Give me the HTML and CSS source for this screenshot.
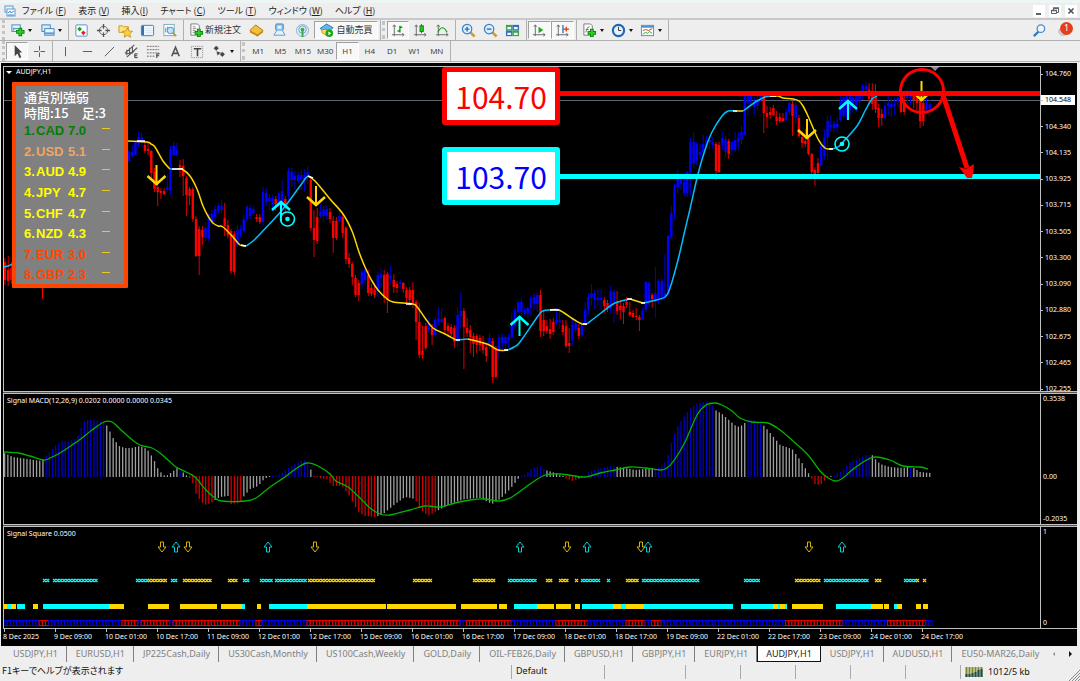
FILE: index.html
```html
<!DOCTYPE html>
<html lang="ja">
<head>
    <meta charset="UTF-8">
    <meta name="viewport" content="width=device-width, initial-scale=1.0">
    <title>AUDJPY,H1</title>
    <link rel="stylesheet" href="styles.css">
</head>
<body>
    <header class="menubar">
        <svg class="app-icon" viewBox="0 0 12 12"><rect x="1" y="1" width="8" height="6" fill="#e8f4fd" stroke="#5b9bd0"/><rect x="3" y="4" width="8" height="7" fill="#fff" stroke="#5b9bd0"/><path d="M4 8l2-2 1 2 3-2M4 10h6" fill="none" stroke="#4a8ac0"/></svg>
        <nav>
            <ul>
                <li><a href="#">ファイル (<u>F</u>)</a></li>
                <li><a href="#">表示 (<u>V</u>)</a></li>
                <li><a href="#">挿入(<u>I</u>)</a></li>
                <li><a href="#">チャート (<u>C</u>)</a></li>
                <li><a href="#">ツール (<u>T</u>)</a></li>
                <li><a href="#">ウィンドウ (<u>W</u>)</a></li>
                <li><a href="#">ヘルプ (<u>H</u>)</a></li>
            </ul>
        </nav>
        <div class="window-buttons">
            <button type="button" aria-label="最小化"><svg viewBox="0 0 12 12"><path d="M3 9h5" stroke="#5a6470" stroke-width="2"/></svg></button>
            <button type="button" aria-label="元に戻す"><svg viewBox="0 0 12 12"><path d="M4.500 5V3.500h5v4H8M2.500 5.500h5v3h-5z" fill="none" stroke="#5a6470"/><path d="M4 3h6M2 5.500h6" stroke="#5a6470" stroke-width="1.500"/></svg></button>
            <button type="button" aria-label="閉じる"><svg viewBox="0 0 12 12"><path d="M3.500 3.500l5 5M8.500 3.500l-5 5" stroke="#4a545f" stroke-width="1.600"/></svg></button>
        </div>
    </header>

    <div class="toolbar">
        <div class="group group-windows">
            <button type="button" class="drop" aria-label="新規チャート"><svg viewBox="0 0 16 16"><rect x="2" y="2" width="9" height="7" fill="#e4f2fd" stroke="#4688c0"/><path d="M4 6h5M4 8v-3" stroke="#4688c0"/><path d="M11 5v9M6.500 9.500h9" stroke="#078a07" stroke-width="4"/><path d="M11 6v7M7.500 9.500h7" stroke="#2ecc2e" stroke-width="2"/></svg></button>
            <button type="button" class="drop" aria-label="プロファイル"><svg viewBox="0 0 16 16"><rect x="2" y="2" width="9" height="7" fill="#d9ecfb" stroke="#3d83be"/><rect x="5" y="6" width="10" height="7" fill="#eaf5fe" stroke="#3d83be"/><path d="M5 11h10" stroke="#5a9bd0" stroke-width="2"/></svg></button>
        </div>
        <div class="group group-panels">
            <button type="button" aria-label="気配値表示"><svg viewBox="0 0 16 16"><rect x="2" y="2" width="12" height="12" rx="1" fill="#fff" stroke="#4a90d0"/><path d="M6 4l2.500 2.500L6 9 3.500 6.500z" fill="#14a514"/><path d="M10 8l2.500 2.500L10 13 7.500 10.500z" fill="#e02424"/></svg></button>
            <button type="button" aria-label="データウィンドウ"><svg viewBox="0 0 16 16"><circle cx="8" cy="8" r="4.500" fill="none" stroke="#666"/><path d="M8 1v5M8 10v5M1 8h5M10 8h5" stroke="#555" stroke-width="1.400"/></svg></button>
            <button type="button" aria-label="ナビゲーター"><svg viewBox="0 0 16 16"><path d="M1 3h4l1 1h5v6H1z" fill="#ffe37c" stroke="#c99a20"/><path d="M10 5l1.500 3.500 4 .4-3 2.600 1 3.800-3.500-2-3.500 2 1-3.800-3-2.600 4-.4z" fill="#ffd23c" stroke="#c08a14" stroke-width=".8"/></svg></button>
            <button type="button" aria-label="ターミナル"><svg viewBox="0 0 16 16"><rect x="1.500" y="2.500" width="13" height="11" rx="1" fill="#eef6fd" stroke="#3a80bc"/><path d="M3 3v10" stroke="#3472a8" stroke-width="2.600"/><path d="M6 6h7M6 8h7M6 10h7" stroke="#cfe0ee" stroke-width=".7"/></svg></button>
            <button type="button" aria-label="ストラテジーテスター"><svg viewBox="0 0 16 16"><rect x="2" y="1.500" width="11" height="12" fill="#fff" stroke="#7ab"/><path d="M4 10V5M6 9V4M10 8V4" stroke="#777"/><circle cx="9" cy="8" r="3.500" fill="#bfe2fb" stroke="#4a90c8"/><path d="M11.500 10.500L15 14" stroke="#c8962a" stroke-width="2.200"/></svg></button>
        </div>
        <div class="group group-orders">
            <button type="button" class="text-button"><svg viewBox="0 0 16 16"><path d="M2 1h7l2 2v10H2z" fill="#fff" stroke="#777"/><path d="M4 4h3M4 6h4M4 8h3M4 10h2" stroke="#888"/><path d="M10.500 6v9M6 10.500h9" stroke="#078a07" stroke-width="4"/><path d="M10.500 7v7M7 10.500h7" stroke="#2ecc2e" stroke-width="2"/></svg>新規注文</button>
            <button type="button" aria-label="メタエディター"><svg viewBox="0 0 16 16"><path d="M1 8l6-6 8 6-6 6z" fill="#f3bf3c" stroke="#a8740e"/><path d="M1 8l8 4 6-4v2l-6 4-8-4z" fill="#c88a16"/></svg></button>
            <button type="button" aria-label="ブック"><svg viewBox="0 0 16 16"><rect x="4" y="1" width="8" height="7" rx="1" fill="#8fc6f2" stroke="#3b82bf"/><path d="M5 8l-3 5h12l-3-5" fill="#e6f2fb" stroke="#5c9bd0"/><path d="M6 3h4v3H6z" fill="#e8f6ff"/></svg></button>
            <button type="button" aria-label="シグナル"><svg viewBox="0 0 16 16" fill="none"><circle cx="8" cy="8" r="6.500" fill="#dcebf3" stroke="#8db4cb"/><circle cx="8" cy="7" r="4" stroke="#6aa3c4"/><circle cx="8" cy="7" r="2" fill="#39a84a"/><path d="M8 8v7" stroke="#39a84a" stroke-width="2"/></svg></button>
            <button type="button" class="text-button auto-trade pressed"><svg viewBox="0 0 16 16"><path d="M1 6l7-5 7 4-2 2H4z" fill="#67b4ea" stroke="#2f78b0"/><path d="M3 7h10v3l-4 4-6-4z" fill="#ffd95a" stroke="#c09018"/><circle cx="11" cy="11" r="4" fill="#18a818"/><path d="M10 9l3 2-3 2z" fill="#fff"/></svg>自動売買</button>
        </div>
        <span class="grip"></span>
        <div class="group group-types">
            <button type="button" class="pressed" aria-label="バーチャート"><svg viewBox="0 0 16 16"><path d="M3.500 2v12M1 12.500h13M2 4l1.500-2L5 4M12 11l2 1.500L12 14" fill="none" stroke="#666"/><path d="M9.500 3v7M7 8.500h2.500M9.500 4.500H12" stroke="#0a920a" stroke-width="1.400"/></svg></button>
            <button type="button" aria-label="ローソク足"><svg viewBox="0 0 16 16"><path d="M3.500 2v12M1 12.500h13M2 4l1.500-2L5 4M12 11l2 1.500L12 14" fill="none" stroke="#666"/><path d="M9 1v10" stroke="#0a920a"/><rect x="7.500" y="3" width="3.500" height="6" fill="#22c922" stroke="#0a820a"/></svg></button>
            <button type="button" aria-label="ラインチャート"><svg viewBox="0 0 16 16"><path d="M3.500 2v12M1 12.500h13M2 4l1.500-2L5 4M12 11l2 1.500L12 14" fill="none" stroke="#666"/><path d="M3 10c3-6 6-7 10 0" fill="none" stroke="#1a9a1a" stroke-width="1.200"/></svg></button>
        </div>
        <div class="group group-zoom">
            <button type="button" aria-label="拡大"><svg viewBox="0 0 16 16"><path d="M10 10l4.500 4.500" stroke="#d2a02c" stroke-width="3"/><circle cx="6.500" cy="6.500" r="5" fill="#dff0fc" stroke="#3a7fc0" stroke-width="1.300"/><path d="M4 6.500h5M6.500 4v5" stroke="#2a70b4" stroke-width="1.500"/></svg></button>
            <button type="button" aria-label="縮小"><svg viewBox="0 0 16 16"><path d="M10 10l4.500 4.500" stroke="#d2a02c" stroke-width="3"/><circle cx="6.500" cy="6.500" r="5" fill="#dff0fc" stroke="#3a7fc0" stroke-width="1.300"/><path d="M4 6.500h5" stroke="#2a70b4" stroke-width="1.500"/></svg></button>
            <button type="button" aria-label="整列"><svg viewBox="0 0 16 16"><rect x="1" y="2" width="7" height="6" fill="#3da63d"/><rect x="8" y="2" width="7" height="6" fill="#2f6fc0"/><rect x="1" y="8" width="7" height="6" fill="#2f6fc0"/><rect x="8" y="8" width="7" height="6" fill="#3da63d"/><path d="M2.500 5.500h4M9.500 5.500h4M2.500 11.500h4M9.500 11.500h4" stroke="#eef7ff" stroke-width="2.400"/></svg></button>
        </div>
        <div class="group group-scroll">
            <button type="button" class="pressed" aria-label="自動スクロール"><svg viewBox="0 0 16 16"><path d="M3.500 2v12M1 12.500h13M2 4l1.500-2L5 4M12 11l2 1.500L12 14" fill="none" stroke="#666"/><path d="M7 4l5 3.500L7 11z" fill="#1ba81b"/></svg></button>
            <button type="button" class="pressed" aria-label="チャートシフト"><svg viewBox="0 0 16 16"><path d="M3.500 2v12M1 12.500h13M2 4l1.500-2L5 4M12 11l2 1.500L12 14" fill="none" stroke="#666"/><path d="M8.500 2v9" stroke="#2a70b8" stroke-width="1.400"/><path d="M9 6.500h6M12 4v5" stroke="#d23a10" stroke-width="1.400"/></svg></button>
        </div>
        <div class="group group-tools">
            <button type="button" class="drop" aria-label="インディケータ"><svg viewBox="0 0 16 16"><path d="M2 1h7l2 2v10H2z" fill="#fff" stroke="#777"/><path d="M4 10c1-2 1-6 4-6M4 7h3" fill="none" stroke="#666"/><path d="M10.500 6v9M6 10.500h9" stroke="#078a07" stroke-width="4"/><path d="M10.500 7v7M7 10.500h7" stroke="#2ecc2e" stroke-width="2"/></svg></button>
            <button type="button" class="drop" aria-label="時間足"><svg viewBox="0 0 16 16"><circle cx="8" cy="8" r="6" fill="#e6f3fd" stroke="#1f66b4" stroke-width="2.200"/><path d="M8 4v4h3" fill="none" stroke="#333"/></svg></button>
            <button type="button" class="drop" aria-label="テンプレート"><svg viewBox="0 0 16 16"><rect x="1.500" y="2.500" width="13" height="11" fill="#fff" stroke="#4a90cc"/><path d="M2 4h12" stroke="#4a90cc" stroke-width="2"/><path d="M3 8l3-1 3 1 4-2" fill="none" stroke="#c04a20"/><path d="M3 12l3-2 2 1 2-2 3 2" fill="none" stroke="#2aa02a"/></svg></button>
        </div>
        <div class="toolbar-end">
            <button type="button" aria-label="検索"><svg viewBox="0 0 16 16"><path d="M7 9l-5 5" stroke="#2f78c0" stroke-width="2.400"/><circle cx="9.500" cy="6" r="4" fill="#eef6fd" stroke="#4a8ccc" stroke-width="1.400"/></svg></button>
            <button type="button" class="notify" aria-label="通知"><svg viewBox="0 0 16 16"><ellipse cx="7" cy="9" rx="5" ry="4" fill="#ddd" stroke="#aaa"/><path d="M5 12l-1 3 4-3z" fill="#ccc"/></svg><span class="badge">1</span></button>
        </div>
    </div>

    <div class="toolbar">
        <div class="group group-cursor">
            <button type="button" class="pressed" aria-label="カーソル"><svg viewBox="0 0 16 16"><path d="M5 1v12l3-3 2 5 2-1-2-5h3z" fill="#444"/></svg></button>
            <button type="button" aria-label="クロスヘア"><svg viewBox="0 0 16 16"><path d="M8 2v5M8 9v5M2 8h5M9 8h5" stroke="#555"/></svg></button>
        </div>
        <div class="group group-lines">
            <button type="button" aria-label="垂直線"><svg viewBox="0 0 16 16"><path d="M8 3v10" stroke="#555"/></svg></button>
            <button type="button" aria-label="水平線"><svg viewBox="0 0 16 16"><path d="M3 8h10" stroke="#555"/></svg></button>
            <button type="button" aria-label="トレンドライン"><svg viewBox="0 0 16 16"><path d="M3 13L13 3" stroke="#555"/></svg></button>
            <button type="button" aria-label="チャネル"><svg viewBox="0 0 16 16"><path d="M1 10L11 1M3 14L14 4M3 6v6M6 4v7M9 3v7M2 11l9-3" stroke="#555" stroke-width="1.100"/><path d="M14.500 10.500h-3v4h3M11.500 12.500h2.500" fill="none" stroke="#333"/></svg></button>
            <button type="button" aria-label="フィボナッチ"><svg viewBox="0 0 16 16"><path d="M1 2.500h13M1 6h13M1 9.500h13M1 13h8" stroke="#666" stroke-dasharray="2 1"/><path d="M14.500 10.500h-3V15M11.500 12.500h2.500" fill="none" stroke="#333"/></svg></button>
            <button type="button" aria-label="テキスト"><svg viewBox="0 0 16 16"><path d="M4 13L8 3.500 12 13M5.500 10h5" fill="none" stroke="#555" stroke-width="1.700"/></svg></button>
            <button type="button" aria-label="テキストラベル"><svg viewBox="0 0 16 16"><rect x="1.500" y="2.500" width="12" height="12" fill="none" stroke="#888" stroke-dasharray="1 1"/><path d="M4 5h8M8 5v8" stroke="#444" stroke-width="1.700"/></svg></button>
            <button type="button" class="drop" aria-label="矢印"><svg viewBox="0 0 16 16"><path d="M4.500 2l2.500 2.500L4.500 7 2 4.500zM5 8l1 4 3-3M11 8.500l2.500 2.500-2.500 2.500L8.500 11z" fill="#444" stroke="#444" stroke-width=".4"/></svg></button>
        </div>
        <span class="grip"></span>
        <div class="group timeframes">
            <button type="button">M1</button>
            <button type="button">M5</button>
            <button type="button">M15</button>
            <button type="button">M30</button>
            <button type="button" class="pressed">H1</button>
            <button type="button">H4</button>
            <button type="button">D1</button>
            <button type="button">W1</button>
            <button type="button">MN</button>
        </div>
    </div>

    <main class="chart-window">
        <section class="pane price-pane">
            <svg id="priceChart" class="plot" viewBox="4 67 1036 324" preserveAspectRatio="none"></svg>
            <h1 class="pane-title symbol">AUDJPY,H1</h1>

            <div class="strength">
                <p>通貨別強弱</p>
                <p>時間:15　足:3</p>
                <ol>
                    <li class="strong"><span>1.</span><span>CAD</span><span>7.0</span><i></i></li>
                    <li class="upper"><span>2.</span><span>USD</span><span>5.1</span><i></i></li>
                    <li><span>3.</span><span>AUD</span><span>4.9</span><i></i></li>
                    <li><span>4.</span><span>JPY</span><span>4.7</span><i></i></li>
                    <li><span>5.</span><span>CHF</span><span>4.7</span><i></i></li>
                    <li><span>6.</span><span>NZD</span><span>4.3</span><i></i></li>
                    <li class="weak"><span>7.</span><span>EUR</span><span>3.0</span><i></i></li>
                    <li class="weak"><span>8.</span><span>GBP</span><span>2.3</span><i></i></li>
                </ol>
            </div>

            <div class="callout callout-high">104.70</div>
            <div class="callout callout-low">103.70</div>
        </section>
        <div class="scale price-scale">
            <span>104.760</span>
            <span class="current">104.548</span>
            <span>104.340</span>
            <span>104.135</span>
            <span>103.925</span>
            <span>103.715</span>
            <span>103.505</span>
            <span>103.300</span>
            <span>103.090</span>
            <span>102.880</span>
            <span>102.675</span>
            <span>102.465</span>
            <span>102.255</span>
        </div>

        <div class="divider"></div>

        <section class="pane">
            <svg id="macdChart" class="plot" viewBox="4 394 1036 130" preserveAspectRatio="none"></svg>
            <h2 class="pane-title">Signal MACD(12,26,9) 0.0202 0.0000 0.0000 0.0345</h2>
        </section>
        <div class="scale macd-scale">
            <span>0.3538</span>
            <span class="zero">0.00</span>
            <span>-0.2035</span>
        </div>

        <div class="divider"></div>

        <section class="pane">
            <svg id="squareChart" class="plot" viewBox="4 527 1036 101" preserveAspectRatio="none"></svg>
            <h2 class="pane-title">Signal Square 0.0500</h2>
        </section>
        <div class="scale">
            <span>1</span>
            <span>0</span>
        </div>

        <div class="time-axis">
            <span>8 Dec 2025</span>
            <span>9 Dec 09:00</span>
            <span>10 Dec 01:00</span>
            <span>10 Dec 17:00</span>
            <span>11 Dec 09:00</span>
            <span>12 Dec 01:00</span>
            <span>12 Dec 17:00</span>
            <span>15 Dec 09:00</span>
            <span>16 Dec 01:00</span>
            <span>16 Dec 17:00</span>
            <span>17 Dec 09:00</span>
            <span>18 Dec 01:00</span>
            <span>18 Dec 17:00</span>
            <span>19 Dec 09:00</span>
            <span>22 Dec 01:00</span>
            <span>22 Dec 17:00</span>
            <span>23 Dec 09:00</span>
            <span>24 Dec 01:00</span>
            <span>24 Dec 17:00</span>
        </div>
    </main>

    <nav class="tabs">
        <a href="#">USDJPY,H1</a>
        <a href="#">EURUSD,H1</a>
        <a href="#">JP225Cash,Daily</a>
        <a href="#">US30Cash,Monthly</a>
        <a href="#">US100Cash,Weekly</a>
        <a href="#">GOLD,Daily</a>
        <a href="#">OIL-FEB26,Daily</a>
        <a href="#">GBPUSD,H1</a>
        <a href="#">GBPJPY,H1</a>
        <a href="#">EURJPY,H1</a>
        <a href="#" class="active">AUDJPY,H1</a>
        <a href="#">USDJPY,H1</a>
        <a href="#">AUDUSD,H1</a>
        <a href="#">EU50-MAR26,Daily</a>
        <div class="tab-arrows">
            <button type="button" aria-label="前へ"><svg viewBox="0 0 6 6"><path d="M4 1v4L2 3z" fill="#888"/></svg></button>
            <button type="button" aria-label="次へ"><svg viewBox="0 0 6 6"><path d="M2 0v6l3-3z" fill="#111"/></svg></button>
        </div>
    </nav>

    <footer class="statusbar">
        <span class="help">F1キーでヘルプが表示されます</span>
        <span class="profile">Default</span>
        <span class="cell cell-wide"></span>
        <span class="cell"></span>
        <span class="cell"></span>
        <span class="cell"></span>
        <span class="cell"></span>
        <span class="cell"></span>
        <span class="traffic">
            <svg viewBox="0 0 20 12"><path d="M1.500 1v10M4.500 1v10M7.500 1v10M10.500 1v10M13.500 1v10M16.500 1v10" stroke="#7d8a1e" stroke-width="2"/><path d="M1.500 8v3M4.500 8v3M7.500 7v4M10.500 6v5M13.500 4v7M16.500 3v8" stroke="#1f4a5c" stroke-width="2"/></svg>
            1012/5 kb
        </span>
        <svg class="resize" viewBox="0 0 12 12"><path d="M1 12L12 1M4 12l8-8M7 12l5-5M10 12l2-2" stroke="#888"/></svg>
    </footer>

    <script src="chart.js"></script>
</body>
</html>
```

FILE: styles.css
```css
* {
    box-sizing: border-box;
}

body {
    margin: 0;
    height: 100vh;
    display: flex;
    flex-direction: column;
    border-top: 3px solid #edf5f5;
    background-color: #eeeeee;
    color: #222;
    font-family: "Noto Sans", "Noto Sans CJK JP", sans-serif;
    font-size: 9px;
    line-height: 12px;
    overflow: hidden;
}

button {
    padding: 0;
    border: 1px solid transparent;
    background: none;
    color: #333;
    font: inherit;
    cursor: pointer;
}

a {
    color: inherit;
    text-decoration: none;
}

svg {
    display: block;
    flex: none;
}

/* menu */
.menubar {
    display: flex;
    align-items: center;
    height: 17px;
    padding: 0 3px 0 4px;
    border-bottom: 2px solid #c8c8c8;
    font-family: "Noto Sans CJK JP", sans-serif;
    font-feature-settings: "palt";
}

.app-icon {
    width: 12px;
    height: 12px;
}

.menubar ul {
    display: flex;
    gap: 12px;
    margin: 0;
    padding: 0 0 0 6px;
    list-style: none;
}

.window-buttons {
    display: flex;
    gap: 4px;
    margin-left: auto;
}

.window-buttons button {
    width: 12px;
    height: 12px;
    border: none;
    background-color: #fff;
}

/* toolbars */
.toolbar {
    display: flex;
    align-items: stretch;
    height: 21px;
    padding-left: 2px;
    border-bottom: 1px solid #b0b0b0;
}

.group {
    display: flex;
    align-items: stretch;
    padding: 1px 2px 1px 1px;
    border-right: 1px solid #b0b0b0;
}

.group button {
    flex: 1;
    display: flex;
    align-items: center;
    justify-content: center;
}

.group svg,
.toolbar-end svg {
    width: 15px;
    height: 15px;
}

.toolbar > .group:first-child,
.grip {
    border-left: 3px dotted #c4c4c4;
}

.grip {
    width: 3px;
    margin: 1px;
}

.group .drop::after {
    content: "";
    margin-left: 3px;
    border: 2px solid transparent;
    border-top: 3px solid #111;
    border-bottom: none;
}

.group .pressed {
    border-color: #a0a0a0 #fff #fff #a0a0a0;
    background-color: #f8f8f8;
}

.group-windows {
    width: 67px;
}

.group-panels {
    width: 115px;
}

.group-orders {
    width: 197px;
    font-family: "Noto Sans CJK JP", sans-serif;
}

.group .text-button {
    flex: none;
    width: 60px;
    gap: 1px;
}

.group .auto-trade {
    width: 64px;
    gap: 2px;
}

.group-types {
    width: 70px;
}

.group-zoom {
    width: 71px;
}

.group-scroll {
    width: 50px;
}

.group-tools {
    width: 92px;
}

.group-cursor {
    width: 51px;
}

.group-lines {
    width: 188px;
}

.group-lines .drop {
    flex: 0 0 29px;
}

.timeframes {
    width: 205px;
    font-family: "Open Sans", sans-serif;
    font-size: 8px;
}

.toolbar-end {
    display: flex;
    gap: 8px;
    margin-left: auto;
    padding: 1px 6px 0 0;
}

.notify {
    position: relative;
    width: 18px;
}

.badge {
    position: absolute;
    top: 0;
    right: 0;
    width: 13px;
    height: 13px;
    border-radius: 50%;
    background-color: #e2401c;
    color: #fff;
    font-size: 9px;
    text-align: center;
}

/* chart */
.chart-window {
    flex: 1;
    min-height: 0;
    display: grid;
    grid-template-columns: minmax(0, 1fr) 36px;
    grid-template-rows: minmax(0, 325fr) 3px minmax(0, 130fr) 3px minmax(0, 101fr) 18px;
    margin: 1px 3px 0 1px;
    padding: 3px 0 0 2px;
    background-color: #000;
    color: #fff;
    font-size: 7px;
    line-height: 10px;
}

.pane {
    position: relative;
    border-left: 1px solid #c0c0c0;
    border-right: 1px solid #c0c0c0;
}

.price-pane {
    border-top: 1px solid #c0c0c0;
}

.plot {
    width: 100%;
    height: 100%;
}

.pane-title {
    position: absolute;
    top: 2px;
    left: 3px;
    margin: 0;
    font-size: 7px;
    font-weight: 400;
}

.symbol {
    top: 0;
    left: 12px;
}

.symbol::before {
    content: "";
    position: absolute;
    top: 4px;
    left: -10px;
    border: 3px solid transparent;
    border-top-color: #fff;
    border-bottom: none;
}

.divider {
    grid-column: 1 / -1;
    border-top: 1px solid #c0c0c0;
    border-bottom: 1px solid #c0c0c0;
    background-color: #555;
}

.scale {
    display: flex;
    flex-direction: column;
    justify-content: space-between;
    padding-left: 2px;
}

.price-scale {
    padding: 3px 0 0;
    margin-bottom: -3px;
    z-index: 1;
}

.price-scale span {
    display: flex;
    align-items: center;
    gap: 2px;
}

.price-scale span::before {
    content: "";
    width: 2px;
    height: 1px;
    background-color: #c0c0c0;
}

.price-scale .current {
    margin-right: 2px;
    background-color: #fff;
    color: #000;
}

.macd-scale .zero {
    margin-top: 36px;
}

.time-axis {
    grid-column: 1 / -1;
    display: flex;
    border-top: 1px solid #c0c0c0;
    white-space: nowrap;
}

.time-axis span {
    flex: 0 0 51px;
    padding-top: 3px;
    background: linear-gradient(#c0c0c0, #c0c0c0) 1px 0 / 1px 3px no-repeat;
}

/* currency strength box */
.strength {
    position: absolute;
    top: 15px;
    left: 8px;
    width: 116px;
    padding: 3px 0 0 8px;
    border: 4px solid #ff4500;
    border-radius: 1px;
    background-color: #808080;
    font-family: "Liberation Sans", "Noto Sans CJK JP", sans-serif;
    font-size: 13px;
    line-height: 16px;
}

.strength p {
    margin: 0;
    font-family: "Noto Sans CJK JP", sans-serif;
    font-weight: 500;
}

.strength ol {
    display: grid;
    grid-auto-rows: 1fr;
    height: 165px;
    margin: 0 0 -2px;
    padding: 0;
    color: #ffff00;
    font-weight: 700;
    line-height: 20px;
    list-style: none;
}

.strength li {
    display: grid;
    grid-template-columns: 12px 32px 34px 8px;
}

.strength li i {
    height: 1px;
    margin-top: 7px;
    background-color: #e6c81e;
}

.strength .strong {
    color: #008000;
}

.strength .upper {
    color: #f4a460;
}

.strength .weak {
    color: #ff4500;
}

/* price labels */
.callout {
    position: absolute;
    left: 42%;
    width: 118px;
    height: 58px;
    margin-left: 3px;
    border: 5px solid #ff0000;
    border-radius: 3px;
    background-color: #fff;
    color: #ff0000;
    font-family: "Noto Sans CJK JP", sans-serif;
    font-size: 30px;
    line-height: 48px;
    text-align: center;
}

.callout-high {
    top: 0;
}

.callout-low {
    top: 80px;
    border-color: #00ffff;
    color: #0000ff;
}

/* tabs */
.tabs {
    display: flex;
    height: 17px;
    padding: 0 6px 1px 4px;
    color: #808080;
    white-space: nowrap;
}

.tabs > a {
    padding: 2px 8px 0 9px;
    border-right: 1px solid #808080;
}

.tabs > .active {
    padding: 2px 8px 0;
    border: 1px solid #111;
    border-top: none;
    background-color: #fff;
    color: #222;
}

.tabs > a:last-of-type {
    border-right: none;
}

.tab-arrows {
    display: flex;
    gap: 8px;
    align-items: center;
    margin-left: auto;
}

.tab-arrows svg {
    width: 6px;
    height: 6px;
}

/* status bar */
.statusbar {
    display: flex;
    align-items: center;
    height: 18px;
    color: #111;
}

.statusbar > span {
    height: 14px;
}

.help {
    flex: 1;
    padding-left: 2px;
    font-family: "Noto Sans CJK JP", sans-serif;
    font-feature-settings: "palt";
}

.profile {
    width: 93px;
    padding-left: 4px;
    border-left: 1px solid #aaa;
}

.cell {
    width: 55px;
    border-left: 1px solid #aaa;
}

.cell-wide {
    width: 81px;
}

.traffic {
    display: flex;
    align-items: center;
    gap: 3px;
    width: 108px;
    padding-left: 4px;
    border-left: 1px solid #aaa;
}

.traffic svg {
    width: 20px;
    height: 12px;
}

.resize {
    align-self: flex-end;
    width: 12px;
    height: 12px;
}
```

FILE: chart.js
```js
var STEP = 3.19; // distance between two bars

// each bar: direction (b = up, r = down), high, body top, body bottom, low
var bars = `
b150,152,161,161 b146,152,156,158 b140,142,155,155 b132,137,145,147 b133,137,142,147 r141,145,151,153 r143,149,151,155 r150,151,173,178 r168,172,189,192 r182,187,192,206
r188,191,193,199 r188,191,194,195 b174,187,190,192 b146,149,190,195 b142,146,155,156 b143,150,155,156 r160,165,167,177 r159,166,176,196 r176,178,195,216 r187,189,196,205
r187,189,219,222 r216,219,256,257 r226,229,256,275 r226,230,237,245 b222,228,238,241 b214,218,239,242 b210,214,222,226 b205,209,217,222 b203,206,211,214 b200,206,210,213
r203,218,226,236 r220,225,235,238 r229,231,271,274 r231,234,272,275 b225,230,245,247 b225,229,236,238 b215,219,231,233 b205,207,219,221 b205,208,216,219 b206,209,213,216
r214,217,219,222 r214,217,222,224 b187,192,222,226 b188,193,202,206 b194,198,201,210 b195,198,205,211 r196,199,204,211 b191,193,204,208 b180,191,202,208 r196,199,206,212
b168,171,196,200 b168,172,180,186 b171,176,180,190 b172,175,181,183 b170,175,180,190 b169,175,180,192 b166,172,176,184 r178,180,228,231 r210,228,240,257 r208,217,241,244
b204,212,216,218 b206,209,216,221 b206,209,216,219 r208,212,219,223 r216,221,238,253 r217,221,238,240 b210,216,221,223 r213,217,233,238 r226,228,259,264 r253,258,264,268
r262,264,277,285 r275,278,295,297 r280,283,295,301 b269,272,284,289 b267,270,280,285 r270,275,293,296 r284,288,294,296 r286,290,295,298 b272,275,292,297 b268,274,278,288
r270,275,298,303 r272,274,300,313 b266,276,278,284 r274,280,287,293 r281,284,288,293 b280,282,284,289 r282,283,289,293 r287,290,298,303 r287,290,300,306 r282,290,303,308
r300,302,322,340 r303,322,355,358 r326,351,355,359 r323,326,348,350 b318,323,330,333 r324,328,335,345 b317,320,335,337 b307,318,322,325 b308,319,322,324 r317,318,330,333
r323,326,331,337 r324,327,334,336 r325,328,342,348 b307,315,342,347 b292,311,316,328 r308,311,327,369 r318,328,333,337 r325,330,337,353 r333,336,344,357 r334,336,345,353
r335,338,345,351 r336,342,350,354 r344,347,356,362 b333,338,344,350 r338,341,377,383 r346,348,377,378 b334,337,352,359 b334,337,343,350 b335,337,343,350 b334,337,340,348
b313,326,337,339 b307,310,326,330 b301,302,312,313 b298,302,312,318 b308,310,314,316 b307,308,313,318 b296,298,308,315 b293,297,304,310 b292,295,304,312 r290,295,331,337
r311,320,331,336 r320,326,331,334 r319,329,334,339 r318,322,332,335 b308,320,323,325 b310,320,322,329 r320,325,332,335 r320,326,346,348 r328,343,346,353 b318,325,340,345
b319,323,330,333 r324,328,336,339 b322,325,335,337 b302,310,325,329 b293,297,310,315 b284,293,298,305 b290,293,300,309 b290,298,300,306 b289,298,300,310 r297,300,306,313
r300,303,308,312 b286,291,309,313 b289,292,302,323 r291,302,311,315 r300,306,310,319 r303,306,312,324 r297,302,305,308 r302,312,315,317 r310,313,317,318 r308,316,317,320
r315,317,320,331 b308,311,320,320 b281,282,310,312 b281,283,302,307 r293,295,299,308 b267,293,301,318 b279,281,300,304 b279,281,297,300 b254,293,298,300 b235,236,294,295
b206,213,237,239 b184,186,213,219 b169,179,187,194 b177,180,184,190 b177,182,193,196 b171,172,193,197 b138,142,172,195 b132,142,163,168 b142,144,161,165 b144,152,155,160
b135,144,152,155 b136,140,146,148 b136,140,142,150 b137,142,145,149 r142,144,171,180 r142,145,172,173 b132,138,145,149 b136,139,152,157 r139,141,154,159 b141,142,150,155
b132,140,150,152 b132,138,142,150 b126,132,140,144 b92,95,135,136 b94,96,103,116 b94,96,102,104 b97,104,107,115 b95,99,106,110 b95,96,100,102 r94,96,113,133
r106,113,117,128 r107,112,115,119 r105,108,115,116 r111,117,121,125 r113,117,121,123 r113,118,121,122 b108,112,120,121 b100,103,112,115 r101,104,116,136 b99,105,118,124
r115,118,136,138 r131,137,143,148 r129,141,144,147 r135,139,154,155 r153,154,172,176 r167,170,176,186 r158,163,173,175 b142,146,165,166 b129,137,156,160 b116,121,137,160
b115,125,127,131 b121,124,128,132 b117,124,127,133 b94,101,120,122 b93,97,116,119 b91,95,118,120 b90,94,110,114 b93,97,108,113 b91,96,105,112 b90,94,102,108
b84,86,92,100 b81,86,90,98 r83,90,99,104 r83,92,104,110 r84,97,109,113 r104,108,118,127 r109,114,118,126 b102,106,118,119 b96,103,106,115 b97,104,107,117
b97,104,106,115 b95,98,102,107 r93,96,112,113 r96,102,112,115 b89,94,98,104 b90,95,98,106 r93,96,100,108 r94,98,103,110 r96,100,121,128 r100,103,121,126
b97,102,110,112 b99,104,109,110`.trim().split(/\s+/);

// moving average, split where the trend colour changes
var average = [
    ["#00bfff", "4,267 8,266 13,264"],
    ["#ffd700", "128,141 147,142 151,144 155,147 163,161 170,169"],
    ["#00bfff", "170,169 178,169"],
    ["#ffd700", "178,169 182,169 190,176 197,189 203,206 208,216 213,223 218,226 223,227 233,237 240,245 246,246"],
    ["#00bfff", "246,246 253,241 262,232 283,209 300,186 305,179 308,176"],
    ["#ffd700", "308,176 315,181 330,199 343,214 352,231 359,252 365,267 372,281 378,290 386,298 393,302 413,304 418,308 425,318 433,328 445,334 456,340"],
    ["#00bfff", "456,340 468,339"],
    ["#ffd700", "468,339 487,344 498,350 508,350"],
    ["#00bfff", "508,350 514,347 520,342 538,316 543,311 550,310"],
    ["#ffd700", "550,310 559,310 573,319 582,324 587,324"],
    ["#00bfff", "587,324 601,313 615,303 630,299"],
    ["#ffd700", "630,299 643,303"],
    ["#00bfff", "643,303 652,301 665,297 670,288 678,260 685,230 690,209 698,174 705,150 712,132 722,116 728,111 736,111"],
    ["#ffd700", "736,111 743,111"],
    ["#00bfff", "743,111 757,101 765,97 770,96"],
    ["#ffd700", "770,96 778,96 783,98 793,99 799,101 803,106 808,116 818,139 825,148 832,149"],
    ["#00bfff", "832,149 838,147 843,142 857,126 865,111 872,99 877,96"]
];
var flat = ["137,141 145,141", "172,169 183,169", "241,245 246,246", "308,176 313,178", "406,304 412,304", "456,340 460,340", "504,350 508,350", "550,310 559,310", "583,324 587,324", "627,299 632,299", "641,303 645,303", "733,111 737,111", "770,96 776,96", "829,149 833,149"];

var macd = [[4,453],[13,457],[27,459],[42,461],[46,456],[50,451],[57,444],[62,441],[68,442],[77,438],[84,421],[90,419],[97,421],[104,423],[107,426],[113,438],[119,446],[125,448],[131,448],[140,446],[147,449],[153,458],[158,469],[163,475],[166,476],[172,472],[177,468],[179,470],[184,473],[188,477],[192,482],[196,495],[201,503],[206,506],[211,504],[215,501],[220,498],[228,497],[231,505],[240,504],[244,497],[250,490],[258,487],[264,480],[270,477],[280,474],[290,467],[296,463],[303,460],[307,461],[310,468],[314,476],[318,479],[327,480],[332,487],[342,487],[350,498],[358,513],[365,517],[375,518],[383,515],[395,505],[405,498],[415,500],[420,510],[428,517],[435,513],[450,505],[465,500],[480,499],[492,505],[500,500],[510,490],[518,480],[524,475],[532,468],[540,466],[545,470],[552,472],[558,474],[563,478],[572,482],[580,479],[585,475],[590,471],[600,468],[610,466],[625,468],[635,470],[645,469],[660,467],[664,464],[668,455],[672,440],[678,425],[688,411],[695,404],[703,402],[708,402],[712,404],[715,410],[722,414],[730,421],[737,427],[743,425],[746,421],[753,420],[760,422],[765,427],[771,434],[780,445],[792,449],[800,460],[807,471],[810,476],[814,485],[820,486],[824,482],[828,478],[832,477],[836,474],[843,470],[850,462],[858,459],[865,455],[872,455],[875,459],[880,464],[890,467],[903,468],[908,466],[912,467],[920,472],[931,473]];
var macdBlue = [[45,105],[178,181],[270,308],[519,545],[585,615],[655,713],[745,761],[832,872],[908,911]];
var macdRed = [[188,215],[229,242],[312,377],[414,436],[563,577],[811,828]];
var signal = "4,452 18,453 30,456 44,460 50,458 60,453 72,445 82,438 92,430 104,422 112,422 120,429 130,438 140,445 152,448 160,453 168,460 176,467 186,472 195,477 206,490 215,498 222,501 245,501 256,498 270,487 285,477 297,468 307,463 318,466 330,474 336,481 348,487 360,498 370,508 380,514 390,515 410,510 425,506 440,507 455,503 470,500 485,499 500,501 512,497 530,484 545,475 560,474 575,476 585,477 600,473 615,470 630,467 645,468 660,470 667,468 675,459 685,442 697,415 706,405 715,403 722,405 732,411 740,418 752,422 768,423 780,430 793,441 808,455 820,471 828,478 836,481 843,478 852,470 865,461 875,457 890,460 903,466 920,467 928,469";

// signal square rows, from x to x
var crossCyan = [[43,50],[53,98],[136,148],[171,178],[243,251],[260,273],[275,308],[508,538],[581,602],[607,611],[642,701],[744,761],[824,869],[904,916]];
var crossGold = [[148,168],[183,213],[228,238],[308,375],[413,433],[473,496],[546,554],[559,570],[575,579],[626,640],[795,822],[875,882],[916,920],[923,927]];
var blockCyan = [[7,11],[17,25],[43,109],[242,245],[269,307],[514,537],[582,613],[621,626],[644,733],[741,773],[778,780],[785,787],[836,871],[894,897]];
var blockGold = [[4,7],[11,16],[33,38],[109,124],[148,169],[180,217],[221,242],[257,261],[307,386],[387,456],[461,497],[499,507],[537,554],[556,571],[575,580],[613,621],[626,644],[773,778],[780,785],[792,823],[871,883],[884,889],[897,902],[916,921],[923,928]];
var trendRed = [[38,46],[121,135],[140,169],[173,240],[255,262],[306,458],[465,511],[555,585],[625,645],[650,658],[784,840],[886,923]];

function rect(x, y, w, h, fill) {
    return `<rect x="${x.toFixed(1)}" y="${y}" width="${w}" height="${h}" fill="${fill}"/>`;
}

function line(points, color, width) {
    return `<polyline points="${points}" fill="none" stroke="${color}" stroke-width="${width}"/>`;
}

// smooth curve through all points
function curve(points, color, width) {
    var p = points.split(" ").map(s => s.split(",").map(Number));
    var d = `M${p[0]}`;
    for (var i = 0; i < p.length - 1; i++) {
        var before = p[i - 1] || p[i], a = p[i], b = p[i + 1], after = p[i + 2] || b;
        var c1 = [0, 1].map(k => (a[k] + (b[k] - before[k]) / 6).toFixed(1));
        var c2 = [0, 1].map(k => (b[k] - (after[k] - a[k]) / 6).toFixed(1));
        d += `C${c1} ${c2} ${b}`;
    }
    return `<path d="${d}" fill="none" stroke="${color}" stroke-width="${width}"/>`;
}

function inside(x, ranges) {
    return ranges.some(r => x >= r[0] && x <= r[1]);
}

function valueAt(points, x) {
    for (var i = 1; i < points.length; i++) {
        if (x <= points[i][0]) {
            var a = points[i - 1], b = points[i];
            return a[1] + (b[1] - a[1]) * (x - a[0]) / (b[0] - a[0]);
        }
    }
    return points[points.length - 1][1];
}

function candle(x, bar) {
    var v = bar.slice(1).split(",").map(Number);
    var up = bar[0] === "b";
    return rect(x - 0.5, v[0], 1, v[3] - v[0], up ? "#0000d0" : "#d80000") +
        rect(x - 1.2, v[1], 2.4, Math.max(1, v[2] - v[1]), up ? "#0000ff" : "#ff0000");
}

// arrow with its tip at x,y; dir 1 points down, -1 points up
function bigArrow(x, y, dir, color) {
    return line(`${x},${y - 20 * dir} ${x},${y}`, color, 2) +
        line(`${x - 9},${y - 9 * dir} ${x},${y - dir} ${x + 9},${y - 9 * dir}`, color, 2.5);
}

function smallArrow(x, dir, color) {
    var y = 547;
    return `<path d="M${x - 1.5} ${y - 5 * dir}h3v${5 * dir}h2.500l-4 ${5 * dir}-4 ${-5 * dir}h2.500z" fill="none" stroke="${color}"/>`;
}

function target(x, y) {
    return `<circle cx="${x}" cy="${y}" r="7" fill="none" stroke="#00ffff" stroke-width="1.600"/><circle cx="${x}" cy="${y}" r="2.300" fill="#00ffff"/>`;
}

function drawPrice() {
    var out = rect(4, 100, 1036, 1, "#5a646c");
    ["r258,262,280,285", "r256,270,281,286", "r262,268,280,284"].forEach((b, i) => out += candle(5 + i * STEP, b));
    out += rect(42, 286, 1, 13, "#ff0000");
    bars.forEach((b, i) => out += candle(129 + i * STEP, b));
    average.forEach(a => out += curve(a[1], a[0], 1.5));
    flat.forEach(p => out += line(p, "#ffffff", 1.5));

    [[156.5, 185], [316, 206], [807, 139], [921.5, 101]].forEach(p => out += bigArrow(p[0], p[1], 1, "#ffd700"));
    [[281, 201], [519.5, 316], [848, 100]].forEach(p => out += bigArrow(p[0], p[1], -1, "#00ffff"));
    out += target(287.5, 219) + target(842, 144);

    out += `<path d="M931 67h8l-4 4z" fill="#8090a0"/>`;
    out += rect(560, 91, 480, 5, "#ff0000") + rect(560, 174, 480, 5, "#00ffff");
    out += `<circle cx="922" cy="91" r="21.500" fill="none" stroke="#ff0000" stroke-width="3"/>`;
    out += line("943,95 967,168", "#ff0000", 5);
    out += `<path d="M959 167l7 2 8-5-1 9-1 5h-5z" fill="#ff0000"/>`;
    document.getElementById("priceChart").innerHTML = out;
}

function drawMacd() {
    var out = "";
    for (var x = 4.5; x < 931; x += STEP) {
        var y = valueAt(macd, x);
        var color = inside(x, macdBlue) ? "#0000c8" : inside(x, macdRed) ? "#d00000" : "#a0a0a0";
        out += rect(x - 0.5, Math.min(y, 476).toFixed(1), 1.3, Math.max(1, Math.abs(477 - y)).toFixed(1), color);
    }
    out += curve(signal, "#00b400", 1.3);
    document.getElementById("macdChart").innerHTML = out;
}

function drawCrosses(ranges, color) {
    var d = "";
    ranges.forEach(r => {
        for (var x = r[0]; x < r[1] - 2; x += STEP) {
            d += `M${x.toFixed(1)} 579l3 3m0-3l-3 3`;
        }
    });
    return `<path d="${d}" stroke="${color}" stroke-width="1.300"/>`;
}

function drawSquare() {
    var out = "";
    [162, 188, 315, 567, 641, 809].forEach(x => out += smallArrow(x, 1, "#d8b400"));
    [176, 268, 520, 587, 648, 842].forEach(x => out += smallArrow(x, -1, "#00d0d8"));
    out += drawCrosses(crossCyan, "#00ffff") + drawCrosses(crossGold, "#ffd700");
    blockCyan.forEach(r => out += rect(r[0], 604, r[1] - r[0], 5, "#00ffff"));
    blockGold.forEach(r => out += rect(r[0], 604, r[1] - r[0], 5, "#ffd700"));
    for (var x = 4; x < 930; x += STEP) {
        var color = inside(x, trendRed) ? "#e00000" : "#0000e0";
        out += `<rect x="${x.toFixed(1)}" y="620.500" width="3" height="5" fill="none" stroke="${color}"/>`;
    }
    document.getElementById("squareChart").innerHTML = out;
}

drawPrice();
drawMacd();
drawSquare();
```
